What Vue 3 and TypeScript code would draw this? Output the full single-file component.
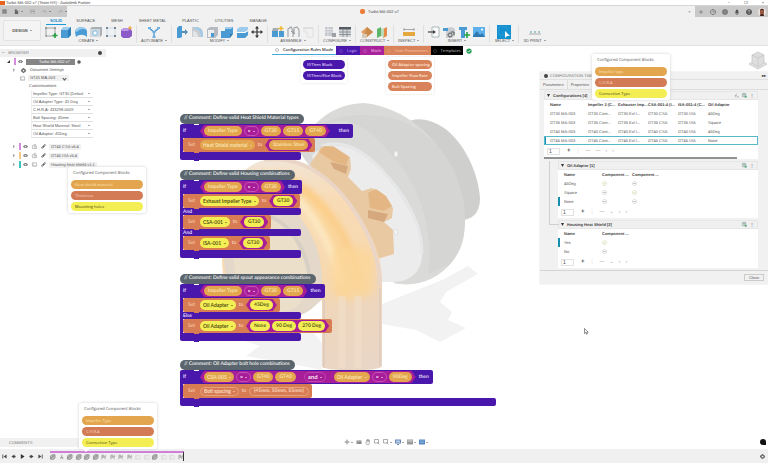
<script setup lang="ts">
import { h } from 'vue'

interface Shape { d: string; f?: string; s?: string; w?: number }
interface Group { label: string; icons: string[] }
interface Token { text: string; kind: string; menu?: boolean }
interface Line { type: string; label: string; tokens: Token[]; tail?: string; wide?: boolean }
interface Stack { id: string; comment: string; long?: boolean; lines: Line[] }
interface Pill { text: string; tone: string }

const B = '#4a9bd4'
const L = '#9ccbec'
const G = '#8b9096'

const icons: Record<string, Shape[]> = {
  sketch: [{ d: 'M1 2h9v8H1z', s: G, w: 0.8 }, { d: 'M0 2h2M9 2h2M0 10h2M1 1v2M10 1v2', s: '#888' }, { d: 'M10 7v5M7.5 9.5h5', s: '#25a244', w: 1.6 }],
  extrude: [{ d: 'M1 4l3-3h7v8l-3 3H1z', f: B }, { d: 'M1 4l3-3h7L8 4z', f: L }, { d: 'M8 4l3-3v8l-3 3z', f: '#2f7fba' }],
  revolve: [{ d: 'M0 6c1-6 10-6 12-1v6C9 8 4 8 1 11z', f: B }, { d: 'M0 5c2-5 10-5 12-1-4-2-8-1-10 2z', f: L }],
  hole: [{ d: 'M0 3l2-2h10v8l-2 2H0z', f: '#a9b0b6' }, { d: 'M0 3h10v8H0z', f: '#d3d7da' }, { d: 'M5 4a3 3 0 1 0 .1 0z', f: L }, { d: 'M5 5.5a1.5 1.5 0 1 0 .1 0z', f: '#fff' }],
  pattern: [{ d: 'M2 2h8v8H2z', s: '#b7d1e6', w: 0.7 }, { d: 'M1 1h2v2H1zM9 1h2v2H9zM1 9h2v2H1zM9 9h2v2H9z', f: '#7c8690' }],
  form: [{ d: 'M1 4l3-2h6l2 3v5l-3 2H3l-2-2z', f: '#8c5bc7' }, { d: 'M1 4l3-2h6L8 5H2z', f: '#bb99e6' }, { d: 'M10 0v4M8 2h4', s: '#f0a030' }],
  automate: [{ d: 'M1 2l5 4 5-4M6 6v5', s: B, w: 1.4 }, { d: 'M0 1h3v2H0zM9 1h3v2H9zM4.5 5h3v2h-3zM4.5 10h3v2h-3z', f: '#6fb1df' }],
  press: [{ d: 'M1 2l2-2h3v11l-2 1H1z', f: B }, { d: 'M6 5h3V3l3 3-3 3V7H6z', f: '#5a8fb5' }],
  fillet: [{ d: 'M1 1h5c4 0 6 3 6 6v4H1z', f: '#c8ccd0' }, { d: 'M3 3c4-1 7 3 7 8h2c0-6-2-10-9-10z', f: L }, { d: 'M2 5c3 0 5 2 5 6H2z', f: '#e2e4e6' }],
  shell: [{ d: 'M1 3l3-2h8v8l-3 3H1z', f: '#b5bbc1' }, { d: 'M2 4h6v7H2z', f: '#eee' }, { d: 'M5 7h3v4H5z', f: B }],
  combine: [{ d: 'M4 1h8v7H9v4H0V5h4z', f: B }, { d: 'M4 1h8l-2 2H4z', f: L }, { d: 'M9 8v4l3-4z', f: '#2d78ae' }],
  split: [{ d: 'M1 3l3-2h8v3l-3 2H1z', f: L }, { d: 'M1 7h8l3-2v4l-3 3H1z', f: B }, { d: 'M0 6.5h9l3-2', s: '#fff' }],
  move: [{ d: 'M6 1v10M1 6h10', s: '#333', w: 1.2 }, { d: 'M6 0l2 2.5H4zM6 12l2-2.5H4zM0 6l2.5-2v4zM12 6L9.5 4v4z', f: '#333' }],
  component: [{ d: 'M0 5h6v6H0zM7 5h5v6H7z', f: B }, { d: 'M1 2h6l-1 3H0z', f: '#a7adb3' }, { d: 'M9 0v5M6.5 2.5h5', s: '#f2b632', w: 1.4 }],
  joint: [{ d: 'M1 11V3l3-2 2 4v6M7 8V2l3-1 2 3v7', s: '#a4a8ac', w: 1.2 }, { d: 'M4 5l4 3', s: G }],
  ghost: [{ d: 'M2 2h9v9H5V6H2z', s: '#e0e0e0' }, { d: 'M1 2h10', s: '#d6d6d6' }],
  configure: [{ d: 'M1 1h8v9H1z', f: '#c5c9cd' }, { d: 'M1 3.5h8M1 6h8M4 1v9', s: '#eee', w: 0.6 }, { d: 'M8 7h4v4H8z', f: '#9aa0a6' }],
  table: [{ d: 'M0 1h12v10H0z', f: '#d5d8da' }, { d: 'M0 1h12v2.5H0z', f: '#555c63' }, { d: 'M0 6h12M0 8.5h12M4 3v8M8 3v8', s: '#7e858c', w: 0.8 }],
  plane: [{ d: 'M0 6l6-5 6 5-6 5z', f: '#dfa066' }, { d: 'M6 1l6 5-6 5-2-4z', f: '#c98a4a' }, { d: 'M1 8h5v4H1z', f: '#d9c9b4' }],
  mid: [{ d: 'M1 3l4-2v9l-4 2z', f: '#5fb56b' }, { d: 'M7 3l4-2v9l-4 2z', f: '#e58c4a' }, { d: 'M5 2l3 1v8l-3-1z', f: '#bcd9b8' }],
  ruler: [{ d: 'M0 6h12v4H0z', f: '#e4a83f' }, { d: 'M1 3.5h10M1 2v3M11 2v3', s: '#888', w: 0.7 }],
  insert: [{ d: 'M4 1h7v10H4z', f: '#fafafa', s: '#9aa', w: 0.8 }, { d: 'M0 6h6', s: '#444', w: 1.2 }, { d: 'M5 4l3 2-3 2z', f: '#444' }],
  decal: [{ d: 'M3 2l6-1 3 2v7l-3 2H3z', f: '#c9cdd1' }, { d: 'M0 2h5v3H0z', f: B }, { d: 'M7 7a2 2 0 1 0 .1 0M8 6h3v3', s: '#555' }],
  bolt: [{ d: 'M1 1h8v3H7v8H3V4H1z', f: B }, { d: 'M9 6v6M6 9h6', s: '#25a244', w: 1.6 }],
  image: [{ d: 'M0 1h12v10H0z', f: '#5db0ea' }, { d: 'M0 10l4-5 3 4 2-2 3 4H0z', f: '#2f78b0' }, { d: 'M9 2.5a1 1 0 1 0 .1 0z', f: '#fff' }],
  select: [{ d: 'M-1-1h14v14H-1z', f: '#1290cf' }, { d: 'M1 1h8v8H1z', s: '#3ba6dc', w: 0.6 }, { d: 'M7 5v7l2-2h3z', f: '#fff' }],
  print: [{ d: 'M0 8h12', s: '#aaa' }, { d: 'M1 5h2v2H1zM5 5h2v2H5zM9 5h2v2H9z', f: '#a4c8cd' }],
  grid: [{ d: 'M1 1h10v10H1z', f: '#777' }, { d: 'M6 1v10M1 6h10', s: '#aaa' }],
  file: [{ d: 'M2 1h5l3 3v8H2z', f: '#666' }, { d: 'M7 1v3h3', s: '#ddd' }],
  save: [{ d: 'M1 1h10v10H1z', f: '#a0a0a0' }, { d: 'M3 1h6v3H3zM3 7h6v4H3z', f: '#ccc' }],
  undo: [{ d: 'M2 5h6c3 0 3 5 0 5M5 2L2 5l3 3', s: '#a2a2a2', w: 1.4 }],
  redo: [{ d: 'M10 5H4c-3 0-3 5 0 5M7 2l3 3-3 3', s: '#a2a2a2', w: 1.4 }],
  eye: [{ d: 'M0 6c3-5 9-5 12 0-3 5-9 5-12 0z', f: '#777' }, { d: 'M6 4a2 2 0 1 0 .1 0z', f: '#ddd' }],
  gear: [{ d: 'M6 1.500a4.500 4.500 0 1 0 .1 0M6 0v3M6 9v3M0 6h3M9 6h3', f: '#666', s: '#666', w: 2 }, { d: 'M6 4a2 2 0 1 0 .1 0z', f: '#eee' }],
  part: [{ d: 'M1 4h6v7H1zM4 1h5v3M7 6h4v5H7', s: '#888', w: 1.2 }],
  sheet: [{ d: 'M1 2h10v8H1z', s: '#888', w: 1.2 }, { d: 'M3 2v7h8', s: '#aaa' }],
  link: [{ d: 'M4 8l4-4', s: '#444', w: 2 }, { d: 'M5 5L1 9l2 2 4-4M7 7l4-4-2-2-4 4', s: '#444', w: 1.6 }],
  plus: [{ d: 'M6 2v8M2 6h8', s: '#777', w: 1.4 }],
  clock: [{ d: 'M6 1a5 5 0 1 0 .1 0', s: '#666', w: 1.6 }, { d: 'M6 3v3h3', s: '#666', w: 1.4 }],
  globe: [{ d: 'M6 0a6 6 0 1 0 .1 0z', f: '#777' }, { d: 'M0 6h12M6 0v12', s: '#999' }],
  bell: [{ d: 'M2 9c2-2 0-7 4-8 4 1 2 6 4 8zM5 10h2v2H5z', f: '#555' }],
  help: [{ d: 'M6 0a6 6 0 1 0 .1 0z', f: '#555' }, { d: 'M4 5c0-3 4-3 4-1 0 1-2 1-2 3M6 8.5v1.5', s: '#ddd', w: 1.3 }],
  first: [{ d: 'M1 1h2v10H1zM11 1v10L4 6z', f: '#444' }],
  prev: [{ d: 'M8 1v10L1 6zM8 4h3v4H8z', f: '#444' }],
  play: [{ d: 'M2 0l9 6-9 6z', f: '#333' }],
  next: [{ d: 'M4 1v10l7-5zM1 4h3v4H1z', f: '#444' }],
  last: [{ d: 'M9 1h2v10H9zM1 1v10l7-5z', f: '#444' }],
  box: [{ d: 'M1 4l3-3h7v7l-3 3H1z', f: '#b9bcbf', s: '#666', w: 1.2 }, { d: 'M2 8l7-5', s: '#666', w: 1.2 }],
  person: [{ d: 'M6 1v4M3 11l3-6 3 6M3 7h6', s: '#888', w: 1.4 }],
  axis: [{ d: 'M2 11V2h4v4l4 5M2 6h8V2', s: '#777', w: 1.2 }],
  faint: [{ d: 'M1 3h10v8H1zM4 1v10', s: '#ccc' }],
  orbit: [{ d: 'M6 1v10M1 6h10', s: '#777', w: 1.3 }, { d: 'M6 3a3 3 0 1 0 .1 0', s: '#999' }],
  camera: [{ d: 'M1 3h10v7H1z', f: '#888' }, { d: 'M1 5h10M4 3v7', s: '#bbb' }],
  hand: [{ d: 'M3 11L1 7l2-1V2l2-1v4-4h2v4-3h2v6l-2 4z', f: '#eee', s: '#888' }],
  zoom: [{ d: 'M1 1h8v7H1zM7 7l4 4', s: '#777', w: 1.2 }],
  monitor: [{ d: 'M0 1h12v8H0zM4 10h4v2H4z', f: '#6c88b5' }, { d: 'M2 3h8v4H2z', f: '#b7d0ee' }],
  views: [{ d: 'M0 1h12v10H0z', f: '#999' }, { d: 'M1 3h10v2H1z', f: '#ddd' }],
  layout: [{ d: 'M0 1h12v10H0z', f: '#5689c4' }, { d: 'M2 4h8M2 7h8', s: '#a9c9ec' }],
  yes: [{ d: 'M6 1a5 5 0 1 0 .1 0', s: '#c3cf95', w: 1 }, { d: 'M3.5 6l2 2 3-4', s: '#a5b763', w: 1.2 }],
  no: [{ d: 'M6 1a5 5 0 1 0 .1 0', s: '#b0b0b0', w: 1 }, { d: 'M3 6h6', s: '#888', w: 1.3 }],
  addcol: [{ d: 'M1 1h8v8H1zM1 4h8M5 1v8', s: '#6f8f86', w: 1.1 }, { d: 'M9 6v6M6 9h6', s: '#35a06a', w: 1.6 }],
  fx: [{ d: 'M2 11c3 0 1-9 5-9M2 6h4M7 7l4 4M11 7l-4 4', s: '#888', w: 1.1 }],
}

const tabs = ['SOLID', 'SURFACE', 'MESH', 'SHEET METAL', 'PLASTIC', 'UTILITIES', 'MANAGE']
const groups: Group[] = [
  { label: 'CREATE', icons: ['sketch', 'extrude', 'revolve', 'hole', 'pattern', 'form'] },
  { label: 'AUTOMATE', icons: ['automate'] },
  { label: 'MODIFY', icons: ['press', 'fillet', 'shell', 'combine', 'split', 'move'] },
  { label: 'ASSEMBLE', icons: ['component', 'joint', 'ghost'] },
  { label: 'CONFIGURE', icons: ['configure', 'table'] },
  { label: 'CONSTRUCT', icons: ['plane', 'mid'] },
  { label: 'INSPECT', icons: ['ruler'] },
  { label: 'INSERT', icons: ['insert', 'decal', 'bolt', 'image'] },
  { label: 'SELECT', icons: ['select'] },
  { label: '3D PRINT', icons: ['print'] },
]
const custom = ['Impeller Type: GT30 (Defaul', 'Oil Adapter Type: 45 Deg', 'C.H.R.A: 433298-0009', 'Bolt Spacing: 45mm', 'Heat Shield Material: Steel', 'Oil Adaptor: 45Deg']
const parts = [
  { name: 'GT45 CSA v6:4', tone: 'violet', icon: 'part' },
  { name: 'GT45 ISA v5:4', tone: 'sand', icon: 'part' },
  { name: 'Housing heat shield v1:1', tone: 'teal', icon: 'sheet' },
]
const cards: { id: string; pills: Pill[] }[] = [
  { id: 'shield', pills: [{ text: 'Heat shield material', tone: 'amber' }, { text: 'Thickness', tone: 'rust' }, { text: 'Mounting holes', tone: 'yellow' }] },
  { id: 'header', pills: [{ text: 'Impeller type', tone: 'amber' }, { text: 'C.H.R.A', tone: 'rust' }, { text: 'Connection Type', tone: 'yellow' }] },
  { id: 'timeline', pills: [{ text: 'Impeller Type', tone: 'amber' }, { text: 'C.H.R.A', tone: 'rust' }, { text: 'Connection Type', tone: 'yellow' }] },
]
const v = (text: string, menu = false): Token => ({ text, kind: 'amber', menu })
const y = (text: string, menu = false): Token => ({ text, kind: 'yellow', menu })
const eq: Token = { text: '=', kind: 'op', menu: true }
const stacks: Stack[] = [
  {
    id: 'material', comment: '// Comment: Define valid Heat Shield Material types', lines: [
      { type: 'if', label: 'If', tokens: [v('Impeller Type'), eq, v('GT30'), v('GT35'), v('GT40')], tail: 'then', wide: true },
      { type: 'set', label: 'Set', tokens: [v('Heat Shield material', true), v('Stainless Steel')] },
    ],
  },
  {
    id: 'housing', comment: '// Comment: Define valid Housing combinations', lines: [
      { type: 'if', label: 'If', tokens: [v('Impeller Type'), eq, v('GT30')], tail: 'then' },
      { type: 'set', label: 'Set', tokens: [y('Exhaust Impeller Type', true), y('GT30')] },
      { type: 'bar', label: 'And', tokens: [] },
      { type: 'set', label: 'Set', tokens: [y('CSA-001', true), y('GT30')] },
      { type: 'bar', label: 'And', tokens: [] },
      { type: 'set', label: 'Set', tokens: [y('ISA-001', true), y('GT30')] },
    ],
  },
  {
    id: 'spout', comment: '// Comment: Define valid spout appearance combinations', lines: [
      { type: 'if', label: 'If', tokens: [v('Impeller Type'), eq, v('GT30'), v('GT35')], tail: 'then' },
      { type: 'set', label: 'Set', tokens: [y('Oil Adapter', true), y('45Deg')] },
      { type: 'bar', label: 'Else', tokens: [] },
      { type: 'set', label: 'Set', tokens: [y('Oil Adapter', true), y('None'), y('90 Deg'), y('270 Deg')] },
    ],
  },
  {
    id: 'bolts', comment: '// Comment: Oil Adapter bolt hole combinations', long: true, lines: [
      { type: 'if', label: 'If', tokens: [v('CSA-001', true), eq, v('GT40'), v('GT40'), { text: 'and', kind: 'join', menu: true }, v('Oil Adapter', true), eq, v('90Deg')], tail: 'then' },
      { type: 'set', label: 'Set', tokens: [{ text: 'Bolt spacing', kind: 'plain', menu: true }, { text: '(45mm, 50mm, 55mm)', kind: 'plain' }] },
    ],
  },
]
const heads = ['Name', 'Impeller 2 (C...', 'Exhauser Imp...', 'CSA-001:4 (I...', 'ISA-001:4 (C...', 'Oil Adaptor']
const rows = [
  ['GT30 MA-003', 'GT30 Com...', 'GT30 Exl I...', 'GT30 CSA', 'GT30 ISA', '45Deg'],
  ['GT35 MA-003', 'GT35 Com...', 'GT35 Exl I...', 'GT35 CSA', 'GT35 ISA', 'Square'],
  ['GT40 MA-003', 'GT40 Com...', 'GT40 Exl I...', 'GT40 CSA', 'GT40 ISA', '45Deg'],
  ['GT45 MA-003', 'GT45 Com...', 'GT45 Exl I...', 'GT45 CSA', 'GT45 ISA', 'None'],
]
const subs = [
  { name: 'Oil Adaptor [1]', cols: ['Component ...', 'Component ...'], active: 'None', rows: [{ n: '45Deg', c: ['yes', 'no'] }, { n: 'Square', c: ['no', 'yes'] }, { n: 'None', c: ['no', 'no'] }] },
  { name: 'Housing Heat Shield [2]', cols: ['Component ...'], active: 'Yes', rows: [{ n: 'Yes', c: ['yes'] }, { n: 'No', c: ['no'] }] },
]
const playback = ['first', 'prev', 'play', 'next', 'last']
const features = ['box', 'person', 'box', 'box', 'box', 'box', 'axis', 'axis', 'axis', 'axis', 'faint', 'faint', 'box', 'faint', 'faint', 'axis']
const navTools: [string, boolean][] = [['orbit', true], ['camera', false], ['hand', false], ['zoom', false], ['zoom', true], ['monitor', true], ['views', true], ['layout', true]]

const Ico = (p: { n: string }) => h('svg', { viewBox: '0 0 12 12', class: 'ico', 'aria-hidden': 'true' },
  icons[p.n].map(s => h('path', { d: s.d, fill: s.f ?? 'none', stroke: s.s ?? 'none', 'stroke-width': s.w ?? 1 })))
Ico.props = ['n']
</script>

<template>
  <div class="app">
    <header>
      <div class="title"><i class="logo"></i><span>Turbo MA-002 v7 (Team HS) - Autodesk Fusion</span><span class="win">−</span><span>❐</span><span>×</span></div>
      <div class="strip">
        <div class="quick">
          <button v-for="q in ['grid', 'file', 'save', 'undo', 'redo']" :key="q" :aria-label="q"><Ico :n="q" /><i v-if="q !== 'grid' && q !== 'save'" class="caret"></i></button>
        </div>
        <div class="doc"><i class="cube"></i>Turbo MA-002 v7</div>
        <button class="shut" aria-label="Close document">×</button>
        <div class="account">
          <button v-for="q in ['plus', 'clock', 'globe', 'bell', 'help']" :key="q" :aria-label="q"><Ico :n="q" /></button>
          <svg class="face" viewBox="0 0 8 8" aria-hidden="true"><circle cx="4" cy="4" r="4" fill="#e8e2de" /><path d="M2 3c0-3 4-3 4 0v2c0 3-4 3-4 0z" fill="#9a5a45" /><path d="M2 3c0-3 4-3 4 0L5 2H3zM2 8c0-3 4-3 4 0z" fill="#45241e" /></svg>
        </div>
      </div>
      <div class="ribbon">
        <button class="design">DESIGN<i class="caret"></i></button>
        <div>
          <nav class="tabs"><button v-for="(t, i) in tabs" :key="t" :class="{ on: i === 0 }">{{ t }}</button></nav>
          <div class="groups">
            <section v-for="g in groups" :key="g.label" class="group">
              <div class="tools"><button v-for="n in g.icons" :key="n" :aria-label="n"><Ico :n="n" /></button></div>
              <button class="glabel">{{ g.label }}<i class="caret"></i></button>
            </section>
          </div>
        </div>
      </div>
    </header>

    <main>
      <svg class="model" viewBox="0 0 400 300" aria-hidden="true">
        <defs>
          <linearGradient id="band" gradientUnits="userSpaceOnUse" x1="60" y1="80" x2="150" y2="300">
            <stop offset="0" stop-color="#f0e6dc" /><stop offset=".3" stop-color="#f8dcb6" /><stop offset=".6" stop-color="#f7d8ae" /><stop offset=".75" stop-color="#eed6bd" /><stop offset="1" stop-color="#ead6c6" />
          </linearGradient>
          <filter id="soft"><feGaussianBlur stdDeviation="3" /></filter>
        </defs>
        <path d="M50 243l40-14 32 40v27l-30-6-46-8 14-10-24-8zM182 230l60-24 26-14 10 8-32 18-6 10 12 10-4 8 18 8-26 14-24-12-34-6z" fill="#f2f2f2" />
        <path d="M206 50c8-8 24-5 38 4 20 14 34 44 36 70 0 14-6 20-16 22z" fill="#cfcfce" />
        <path d="M98 76c10-22 30-46 66-47 40 4 78 34 92 79 12 38 12 60-4 80-14 18-38 26-58 21z" fill="#dadad9" />
        <path d="M116 56c20-16 44-10 66 14 36 36 52 78 46 130l22-10c16-18 18-46 12-70-8-38-38-68-70-76-32-6-62-4-76 12z" fill="#d5d5d4" />
        <path d="M112 82c14-16 38-14 62 8 26 24 46 60 48 84 2 22-10 34-30 34h-20z" fill="#ececec" />
        <path d="M122 72c16-6 36 0 56 20 28 28 44 58 44 88" fill="none" stroke="#e6e7e8" stroke-width="3" />
        <g fill="#f4f4f4" stroke="#d6d6d6" stroke-width=".6"><ellipse cx="196" cy="80" rx="2" ry="3" /><ellipse cx="196" cy="158" rx="2" ry="3" /></g>
        <path d="M117 80l4-7 12-1 17 11 1 12-3 8 14 14 10-3 12 8 9 12-1 10-8 4 9 8 1 24-20 6-20-40-44-56z" fill="#e9c9a2" />
        <path d="M119 78l5-6 10 1 15 10-3 8-12-3zM168 119l8-4 10 7 6 10-8 5-14-3z" fill="#e4b684" />
        <path d="M130 88l18 4-2 8-12-5zM168 136l20 4-4 8-16-4z" fill="#d5a97d" />
        <path d="M22 186c-4-54 14-100 50-101 36-2 66 24 84 52 16 24 26 44 26 72v83c0 6-60 6-60 0v-66c-20 14-40 22-66 20-20-8-34-30-34-60z" fill="url(#band)" />
        <path d="M42 106c34-12 72 8 92 60 8 20 10 40 10 58" fill="none" stroke="#fdd18b" stroke-width="12" opacity=".6" filter="url(#soft)" />
        <path d="M76 100c40 14 74 54 84 114" fill="none" stroke="#ffbf5f" stroke-width="6" opacity=".6" filter="url(#soft)" />
        <path d="M64 104c36 12 64 52 78 106" fill="none" stroke="#fff2cf" stroke-width="5" opacity=".9" filter="url(#soft)" />
        <path d="M132 180c10-10 32-10 40 0l2 38c-14 10-28 10-42 0z" fill="#fcd79a" opacity=".8" filter="url(#soft)" />
        <path d="M64 86c44-6 76 26 96 60 14 24 20 44 20 66" fill="none" stroke="#ead5c7" stroke-width="4" />
        <path d="M24 186c-2-40 12-64 40-64 32 4 56 42 58 80v22c-16 22-40 24-64 20-22-10-32-30-34-58z" fill="#e3d8ca" />
        <path d="M34 190c0-32 10-50 30-50 26 4 42 34 44 64 0 22-12 34-30 34-26 0-42-20-44-48z" fill="#ecdfc9" />
        <path d="M60 140c30 4 50 40 50 72" fill="none" stroke="#d8cfc5" stroke-width="4" />
        <path d="M142 222v72M158 222v72" stroke="#f2dfca" stroke-width="7" opacity=".6" />
        <path d="M124 226v68M180 214v78" stroke="#e1cdbd" stroke-width="2" />
      </svg>

      <nav class="modes">
        <button class="mode rules"><i class="ring"></i>Configuration Rules Mode</button>
        <button class="mode logic"><i class="ring"></i>Logic</button>
        <button class="mode math"><i class="ring"></i>Math</button>
        <button class="mode user"><i class="ring"></i>User Parameters</button>
        <button class="mode temp"><i class="ring"></i>Templates</button>
        <svg class="ok" viewBox="0 0 8 8" aria-hidden="true"><circle cx="4" cy="4" r="3.5" fill="#1f9a55" /><path d="M2 4l1.5 1.5L6 2.5" fill="none" stroke="#fff" /></svg>
      </nav>
      <div class="drop blocks"><button v-for="t in ['If/Then Block', 'If/Then/Else Block']" :key="t">{{ t }}</button></div>
      <div class="drop params"><button v-for="t in ['Oil Adaptor spacing', 'Impeller Flow Rate', 'Bolt Spacing']" :key="t">{{ t }}</button></div>

      <aside class="browser">
        <div class="bhead"><b>−</b>BROWSER<i class="dot"></i></div>
        <div class="brow root"><i class="tri"></i><i class="chip violet"></i><Ico n="eye" /><span class="sel"><Ico n="part" />Turbo MA-002 v7</span><i class="radio"></i></div>
        <div class="brow"><i class="arrow"></i><Ico n="gear" /><span>Document Settings</span></div>
        <div class="brow config"><Ico n="sheet" /><label><select aria-label="Configuration"><option>GT45 MA-003</option></select><i class="chev"></i></label></div>
        <div class="sub">Customizations</div>
        <ul><li v-for="c in custom" :key="c"><select :aria-label="c"><option>{{ c }}</option></select><i class="caret"></i></li></ul>
        <div v-for="p in parts" :key="p.name" class="brow part"><i class="arrow"></i><i class="chip" :class="p.tone"></i><Ico n="eye" /><Ico :n="p.icon" /><Ico n="link" /><span>{{ p.name }}</span></div>
      </aside>

      <section v-for="s in stacks" :key="s.id" class="stack" :class="s.id">
        <div class="comment">{{ s.comment }}</div>
        <div v-for="(l, i) in s.lines" :key="i" class="line" :class="l.type">
          <div class="inner">
            <span class="word">{{ l.label }}</span>
            <template v-if="l.type === 'if'">
              <div class="hex">
                <template v-for="(t, k) in l.tokens" :key="k">
                  <label v-if="t.menu" class="pill" :class="t.kind"><select :aria-label="t.text"><option>{{ t.text }}</option></select><i class="caret"></i></label>
                  <span v-else class="pill" :class="t.kind">{{ t.text }}</span>
                </template>
              </div>
              <span class="then" :class="{ wide: l.wide }">{{ l.tail }}</span>
            </template>
            <template v-if="l.type === 'set'">
              <label class="pill" :class="l.tokens[0].kind"><select :aria-label="l.tokens[0].text"><option>{{ l.tokens[0].text }}</option></select><i class="caret"></i></label>
              <span class="to">to</span>
              <div :class="l.tokens[1].kind === 'plain' ? 'flat' : 'hex'"><span v-for="t in l.tokens.slice(1)" :key="t.text" class="pill" :class="t.kind">{{ t.text }}</span></div>
            </template>
          </div>
        </div>
        <div class="foot" :class="{ long: s.long }"></div>
      </section>

      <svg class="viewcube" viewBox="0 0 20 20" aria-hidden="true"><path d="M1 14l9-5 9 5-9 5z" fill="#e3e3e3" stroke="#d0d0d0" /><path d="M4 5l6-3 6 3v8l-6 4-6-4z" fill="#dedede" /><path d="M4 5l6 3 6-3M10 8v9M4 5l6-3 6 3v8l-6 4-6-4z" fill="none" stroke="#c3c3c3" stroke-width=".7" /></svg>

      <section class="dialog">
        <div class="dhead"><i class="dot"></i>CONFIGURATION TABLE<b>▸▸</b></div>
        <div class="dtabs"><button class="on">Parameters</button><button>Properties</button></div>
        <div class="dbody">
          <div class="panel">
            <div class="phead"><i class="tri"></i><span>Configurations [4]</span><Ico n="fx" /><Ico n="addcol" /><span>⋮</span></div>
            <table>
              <thead><tr><th v-for="t in heads" :key="t">{{ t }}</th></tr></thead>
              <tbody><tr v-for="(r, i) in rows" :key="i" :class="{ picked: i === 3 }"><td v-for="(c, k) in r" :key="k">{{ c }}</td></tr></tbody>
            </table>
            <div class="pager"><input aria-label="Row count" value="1" /><b>+</b><span>⋮</span><span>—</span><span>—</span><span>‹</span><span>›</span></div>
            <div class="scroll"></div>
          </div>
          <div class="tree">
            <div v-for="s in subs" :key="s.name" class="panel nested">
              <div class="phead"><i class="tri"></i><span>{{ s.name }}</span><Ico n="addcol" /><span>⋮</span></div>
              <table>
                <thead><tr><th>Name</th><th v-for="(c, k) in s.cols" :key="k">{{ c }}</th><th></th></tr></thead>
                <tbody><tr v-for="r in s.rows" :key="r.n" :class="{ active: r.n === s.active }"><td>{{ r.n }}</td><td v-for="(c, k) in r.c" :key="k"><Ico :n="c" /></td><td></td></tr></tbody>
              </table>
              <div class="pager"><input :aria-label="s.name + ' count'" value="1" /><b>+</b><span>⋮</span><span>—</span><span>⌄</span><span>‹</span><span>›</span></div>
            </div>
          </div>
        </div>
        <div class="dfoot"><button>Close</button></div>
      </section>

      <svg class="pointer" viewBox="0 0 5 7" aria-hidden="true"><path d="M.5.5v5l1.300-1 .8 1.800.8-.4-.8-1.700h1.600z" fill="#fff" stroke="#444" stroke-width=".6" /></svg>

      <div v-for="c in cards" :key="c.id" class="card" :class="c.id">
        <div>Configured Component Blocks</div>
        <button v-for="p in c.pills" :key="p.text" :class="p.tone">{{ p.text }}</button>
      </div>

      <div class="comments">COMMENTS</div>
      <nav class="navbar"><button v-for="(n, i) in navTools" :key="i" :aria-label="n[0]"><Ico :n="n[0]" /><i v-if="n[1]" class="caret"></i></button></nav>
      <button class="chat" aria-label="Assistant"></button>
    </main>

    <footer>
      <div class="play"><button v-for="n in playback" :key="n" :aria-label="n"><Ico :n="n" /></button></div>
      <div class="track"><Ico v-for="(n, i) in features" :key="i" :n="n" /></div>
      <button class="prefs" aria-label="Timeline settings"><Ico n="gear" /></button>
    </footer>
  </div>
</template>

<style>
body { margin: 0; background: #fff; overflow: hidden; }
</style>

<style scoped>
.app { min-height: 100vh; display: flex; flex-direction: column; font: 4px/6px "Liberation Sans", Arial, sans-serif; color: #555; text-rendering: geometricPrecision; }
.app :deep(*) { box-sizing: border-box; }
button, select, input { font: inherit; color: inherit; background: none; border: 0; padding: 0; margin: 0; border-radius: 0; }
select { appearance: none; }
i { display: block; flex: none; }
.app :deep(.ico) { width: 6px; height: 6px; display: block; flex: none; overflow: visible; }
.caret { border: 1px solid transparent; border-top-color: currentColor; border-bottom: 0; margin-left: 2px; width: 2px; }
.dot { width: 4px; height: 4px; border-radius: 50%; background: #444; }
.tri { width: 3px; height: 3px; background: #333; clip-path: polygon(0 0, 100% 0, 50% 100%); }

header { height: 46px; background: #f1f1f1; border-bottom: 1px solid #e2e2e2; }
.title { height: 5px; display: flex; align-items: center; gap: 14px; padding-right: 4px; background: #fff; line-height: 4px; color: #444; overflow: hidden; }
.logo { width: 5px; height: 4px; background: #e8641c; margin-right: -13px; }
.win { margin-left: auto; }
.strip { height: 12px; border-top: 1px solid #d5d5d5; display: flex; align-items: center; }
.quick, .account { align-self: stretch; background: #c9c9c9; display: flex; align-items: center; }
.quick { width: 67px; padding: 0 2px; gap: 7px; }
.quick button { display: flex; align-items: center; }
.quick :deep(.ico) { width: 5px; height: 5px; }
.doc { flex: 1; display: flex; align-items: center; justify-content: center; gap: 3px; padding-left: 8px; color: #444; }
.cube { width: 5px; height: 5px; border-radius: 2px; background: #ee7b36; }
.shut { width: 11px; }
.account { gap: 6px; padding: 0 3px; width: 73px; }
.face { width: 8px; height: 8px; flex: none; }
.ribbon { display: flex; height: 28px; }
.design { width: 38px; margin: 3px 2px 4px 3px; border: 1px solid #e3e3e3; background: #f4f4f4; border-radius: 2px; font-weight: 700; display: flex; align-items: center; justify-content: center; }
.tabs { display: flex; height: 8px; gap: 16px; padding-left: 3px; }
.tabs button { line-height: 6px; border-bottom: 1px solid transparent; white-space: nowrap; }
.tabs .on { color: #1187c9; border-color: #1a9ad8; padding: 0 4px; margin-right: -6px; font-weight: 700; }
.groups { display: flex; }
.group { padding: 1px 4px 0; border-right: 1px solid #e0e0e0; display: flex; flex-direction: column; align-items: center; min-width: 29px; }
.group:first-child { padding-left: 2px; }
.group:last-child { border: 0; }
.group:nth-child(2) { min-width: 35px; }
.tools { display: flex; gap: 3px; }
.tools :deep(.ico) { width: 12px; height: 12px; }
.glabel { display: flex; align-items: center; line-height: 5px; white-space: nowrap; }

main { flex: 1; position: relative; background: #fff; }
.model { position: absolute; left: 200px; top: 28px; width: 400px; height: 300px; }
.modes { position: absolute; left: 272px; top: 0; height: 9px; display: flex; align-items: center; font: 600 4px/8px "Open Sans", sans-serif; color: #fff; }
.mode { height: 9px; padding: 0 3px; display: flex; align-items: center; gap: 4px; white-space: nowrap; }
.ring { width: 4px; height: 4px; border: 1px solid currentColor; border-radius: 50%; opacity: .3; }
.rules { color: #333; background: #fff; border-bottom: 1px solid #45aadd; }
.logic { background: #4a17ac; color: #a98ce4; }
.math { background: #a8229b; color: #e3a0dc; }
.user { background: #d9835a; color: #f3bb9c; }
.temp { background: #000; color: #999; padding: 0 2px; }
.ok { width: 6px; height: 6px; margin-left: 3px; }
.drop { position: absolute; padding: 3px 2px; display: flex; flex-direction: column; gap: 2px; background: #fff; box-shadow: 0 0 2px #ddd; font: 600 4px/9px "Open Sans", sans-serif; }
.drop button { border-radius: 5px; padding: 0 4px; text-align: left; height: 9px; white-space: nowrap; }
.blocks { left: 301px; top: 11px; width: 46px; }
.blocks button { background: #4a17ac; color: #dccdf5; }
.params { left: 386px; top: 11px; width: 48px; }
.params button { background: #d9835a; color: #fbe3d5; }

.browser { position: absolute; left: 0; top: 3px; width: 106px; }
.bhead { height: 8px; background: #f0f0f0; display: flex; align-items: center; gap: 4px; padding: 0 4px 0 2px; color: #777; }
.bhead .dot { margin-left: auto; }
.brow { display: flex; align-items: center; gap: 3px; height: 8px; padding-left: 13px; white-space: nowrap; }
.browser :deep(.ico) { width: 5px; height: 5px; }
.root { padding-left: 7px; height: 9px; gap: 2px; }
.root .tri { clip-path: polygon(100% 0, 100% 100%, 0 100%); margin-right: 2px; }
.sel { background: #858585; color: #fff; display: flex; align-items: center; gap: 6px; height: 6px; padding: 0 5px 0 2px; margin-left: 1px; }
.radio { width: 4px; height: 4px; border: 1px solid #999; border-radius: 50%; background: #444; }
.chip { width: 2px; height: 7px; }
.violet { background: #d78be0; } .sand { background: #f3c987; } .teal { background: #3cc4bd; }
.arrow { width: 2px; height: 4px; background: #aaa; clip-path: polygon(0 0, 100% 50%, 0 100%); }
.brow .arrow + :deep(.ico) { margin: 0 1px 0 3px; }
.config { padding-left: 20px; }
.config label { display: flex; align-items: center; gap: 7px; background: #f0f0f0; padding: 0 3px 0 2px; }
.chev { width: 3px; height: 3px; border: solid #444; border-width: 0 1px 1px 0; transform: rotate(45deg); }
.sub { padding-left: 29px; line-height: 8px; }
ul { list-style: none; margin: 0; padding: 0 0 0 31px; }
li { height: 8px; width: 62px; border-bottom: 1px solid #e0e0e0; border-left: 1px solid #eee; display: flex; align-items: center; justify-content: space-between; padding: 0 3px 0 1px; }
ul + .part { margin-top: 4px; }
.part { height: 9px; }
.part .chip { margin-left: 1px; margin-right: -1px; }
.part > :deep(.ico + .ico) { margin-left: 1px; }
.part span { background: #f1f1f1; padding: 0 2px; }

.stack { position: absolute; left: 180px; font: 600 5px/8px Lato, "Open Sans", sans-serif; color: #f3e9ff; display: flex; flex-direction: column; align-items: flex-start; white-space: nowrap; }
.material { top: 68px; } .housing { top: 124px; } .spout { top: 228px; } .bolts { top: 314px; }
.comment { height: 10px; line-height: 9px; padding: 0 5px 0 4px; border-radius: 5px; background: #5b656d; color: #f2f2f2; }
.inner { display: flex; align-items: center; height: 100%; }
.if { height: 14px; background: #4a17ac; padding: 0 4px 0 3px; border-radius: 2px 2px 2px 0; position: relative; }
.if::before { content: ""; position: absolute; left: 14px; top: 0; width: 5px; height: 1px; background: #fff; }
.if .word { width: 17px; }
.set { height: 14px; border-left: 3px solid #4a17ac; }
.set .inner { background: #d87c54; padding: 0 3px 0 5px; border-radius: 2px; position: relative; }
.set .inner::after, .foot::after { content: ""; position: absolute; left: 11px; top: 100%; width: 5px; height: 1px; background: #d87c54; z-index: 1; }
.set .word { width: 12px; color: #f7c9a9; }
.bar { height: 7px; width: 121px; background: #4a17ac; padding-left: 3px; border-radius: 0 2px 2px 0; }
.foot { height: 8px; width: 121px; background: #4a17ac; border-radius: 0 2px 2px 2px; position: relative; }
.foot::after { left: 14px; background: #4a17ac; }
.foot.long { width: 316px; }
.hex { display: flex; align-items: center; gap: 2px; height: 12px; padding: 0 4px; background: #a81e98; clip-path: polygon(4px 0, calc(100% - 4px) 0, 100% 50%, calc(100% - 4px) 100%, 4px 100%, 0 50%); }
.flat { display: flex; }
.pill { height: 10px; border-radius: 5px; padding: 0 3px; display: flex; align-items: center; }
span.pill { padding: 0 4px; }
.amber { background: #e3a64e; color: #fbe6bd; }
.rust { background: #d27b54; color: #fad5c3; }
.yellow { background: #f3ee54; color: #44420f; }
.op { border: 1px solid #c552ba; color: #fff; }
.join { color: #fff; border: 1px solid #bd42b2; margin: 0 6px; font-size: 6px; }
.plain { border: 1px solid #e6a27d; height: 9px; color: #fde2cf; }
.to { width: 10px; text-align: center; color: #fbd6bd; }
.then { margin-left: 3px; }
.then.wide { margin-left: 9px; }

.viewcube { position: absolute; right: 0; top: 4px; width: 20px; height: 20px; }
.dialog { position: absolute; right: 0; top: 26px; width: 228px; background: #f1f1f1; box-shadow: 0 0 1px #bbb; }
.dhead { height: 8px; display: flex; align-items: center; gap: 2px; padding: 0 2px 0 4px; color: #777; border-bottom: 1px solid #e0e0e0; }
.dhead b { margin-left: auto; color: #333; }
.dtabs { height: 10px; display: flex; align-items: stretch; border-bottom: 1px solid #ddd; }
.dtabs button { padding: 0 3px; border-right: 1px solid #ddd; }
.dbody { padding: 1px 10px 2px 4px; }
.panel { background: #fff; }
.phead { height: 9px; background: #f0f0f0; border: 1px solid #e6e6e6; display: flex; align-items: center; gap: 3px; padding: 0 3px 0 2px; font-weight: 700; color: #444; }
.phead span:first-of-type { margin-right: auto; }
.dialog :deep(.ico) { width: 5px; height: 5px; }
table { width: 100%; border-collapse: collapse; table-layout: fixed; }
th, td { padding: 0; height: 9px; text-align: left; white-space: nowrap; font-weight: 400; }
th { width: 30px; font-weight: 700; color: #444; }
th:first-child, td:first-child { width: 44px; padding-left: 6px; }
th:last-child { width: auto; }
.picked { outline: 1px solid #56b8c9; outline-offset: -1px; }
.picked td:first-child, .active td:first-child { box-shadow: inset 2px 0 #168fae; }
.pager { height: 12px; display: flex; align-items: center; gap: 5px; padding-left: 3px; color: #999; font-size: 5px; }
.pager input { width: 13px; height: 7px; border: 1px solid #e2e2e2; padding-left: 1px; color: #555; }
.pager b { color: #444; margin-left: 2px; font-size: 6px; }
.scroll { height: 2px; width: 90%; background: #929292; }
.tree { margin: 2px 0 0 5px; padding: 0 0 0 9px; position: relative; display: flex; flex-direction: column; gap: 2px; }
.tree::before { content: ""; position: absolute; left: 0; top: 0; bottom: 43px; width: 9px; border-left: 1px solid #d0d0d0; border-bottom: 1px solid #d0d0d0; }
.dfoot { border-top: 1px solid #d5d5d5; height: 14px; padding: 3px 4px; display: flex; justify-content: flex-end; }
.dfoot button { width: 20px; height: 7px; border: 1px solid #ccc; line-height: 5px; }
.pointer { position: absolute; left: 584px; top: 282px; width: 5px; height: 7px; }

.card { position: absolute; width: 78px; padding: 2px 3px; background: #fff; border-radius: 2px; box-shadow: 0 0 3px #ccc; font: 4px/9px "Open Sans", sans-serif; display: flex; flex-direction: column; gap: 2px; }
.card div { padding: 0 2px; color: #555; }
.card button { height: 9px; border-radius: 5px; text-align: left; padding: 0 4px; line-height: 8px; }
.shield { left: 68px; top: 121px; }
.header { right: 98px; top: 8px; }
.timeline { left: 79px; bottom: 0; }
.card.header::after, .card.timeline::after { content: ""; position: absolute; left: 4px; top: 100%; border: 3px solid transparent; border-top-color: #fff; border-bottom: 0; }
.comments { position: absolute; left: 0; bottom: 2px; width: 80px; height: 9px; line-height: 9px; padding-left: 9px; background: #f1f1f1; color: #777; z-index: -1; }
main { z-index: 0; }
.navbar { position: absolute; left: 344px; bottom: 4px; display: flex; align-items: center; gap: 3px; }
.navbar button { display: flex; align-items: center; }
.navbar .caret { margin-left: 1px; }
.chat { position: absolute; right: 2px; bottom: 4px; width: 6px; height: 6px; background: #111; border-radius: 3px 3px 0 3px; }

footer { height: 14px; background: #f0f0f0; display: flex; align-items: center; padding-left: 2px; }
.play { display: flex; gap: 4px; width: 48px; }
.play :deep(.ico) { width: 5px; height: 5px; }
.track { height: 10px; display: flex; align-items: center; gap: 3px; width: 134px; border-top: 2px solid #cf7fd8; border-right: 1px solid #333; }
.track :deep(.ico) { width: 5px; flex: 1; height: 6px; }
.prefs { margin-left: auto; margin-right: 3px; }
.prefs :deep(.ico) { width: 5px; height: 5px; }
</style>
